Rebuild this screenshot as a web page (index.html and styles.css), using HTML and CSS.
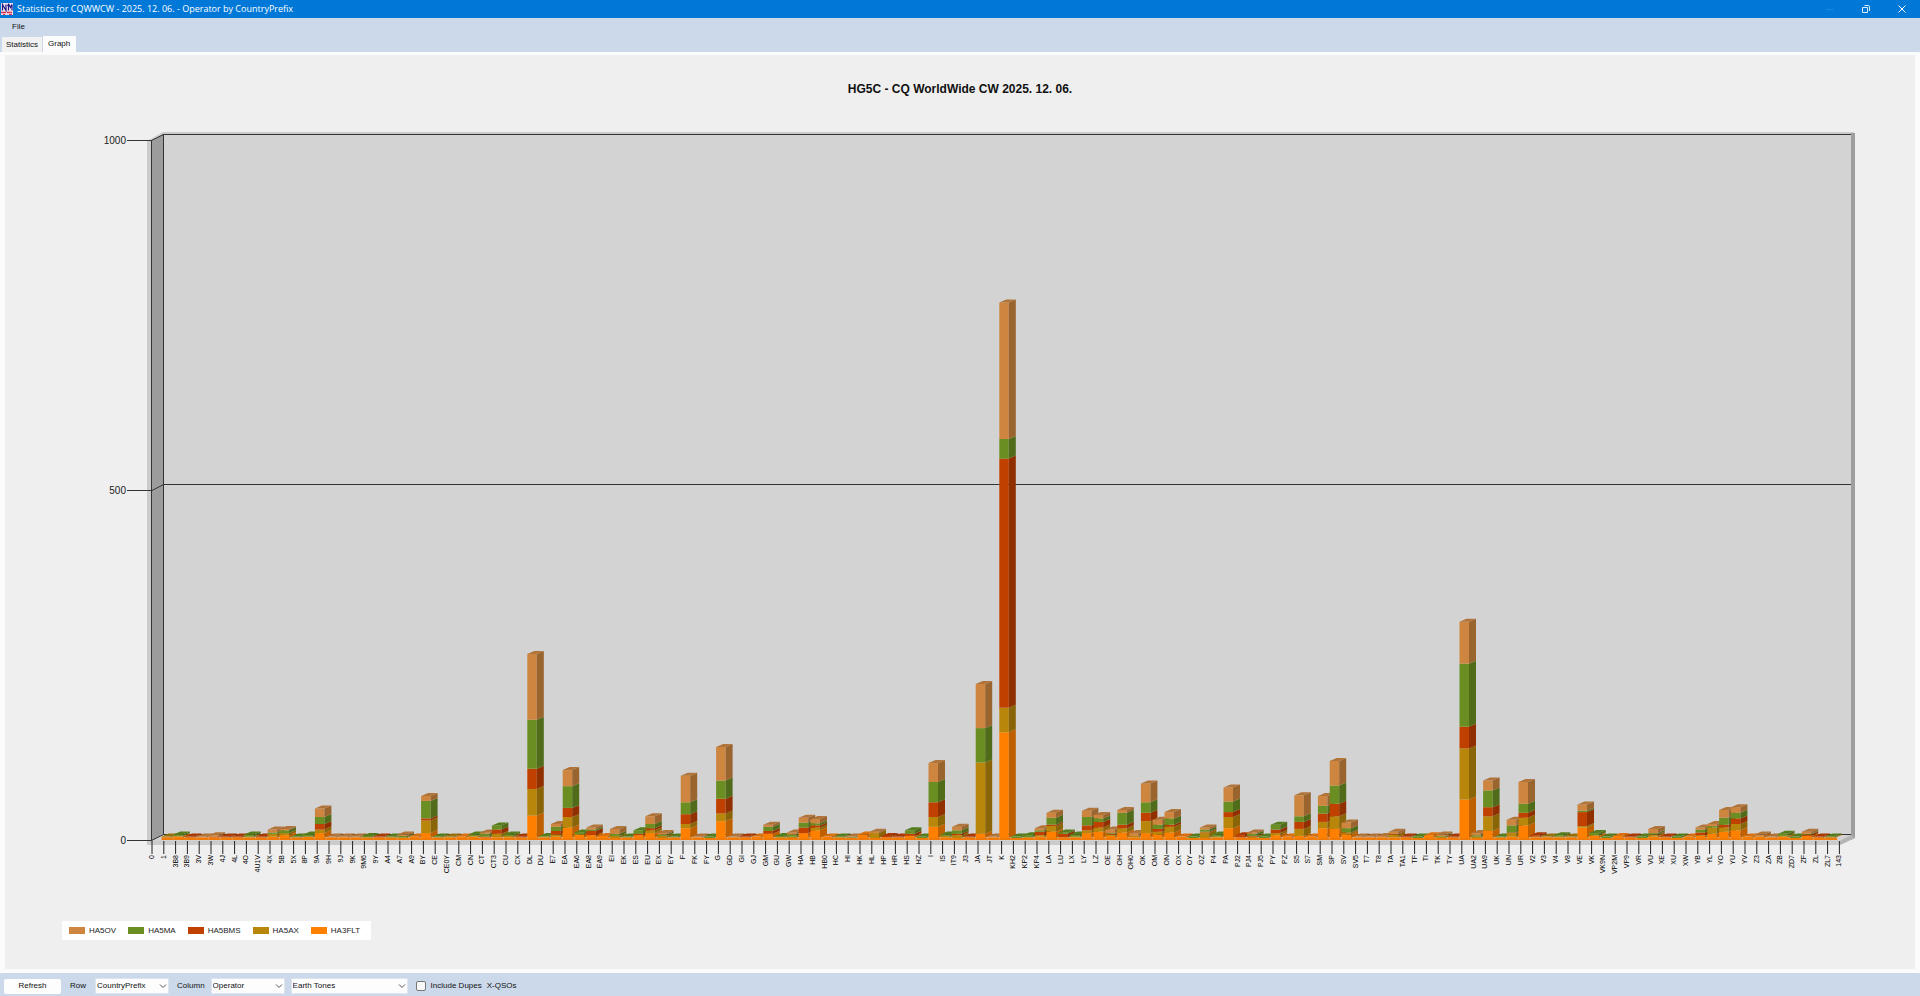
FILE: index.html
```html
<!DOCTYPE html>
<html lang="en">
<head>
<meta charset="utf-8">
<title>Statistics for CQWWCW</title>
<link rel="stylesheet" href="styles.css">
</head>
<body>
<header class="titlebar">
  <svg class="app-icon" viewBox="0 0 12 12" aria-hidden="true">
    <rect width="12" height="12" fill="#f3dfe8"/>
    <path d="M1.500 7.500V1.500L5 7.500V1.500M6.500 3l1-1.500V7.500M8 1.500l1.500 3 1.500-3V7.500" fill="none" stroke="#1c1c86" stroke-width="1.200"/>
    <path d="M0 9.500h5M6 9.500h5" stroke="#d8304a" stroke-width="1.500"/>
    <path d="M2 11.500h2M8 11.500h3" stroke="#d8304a"/>
  </svg>
  <span class="window-title">Statistics for CQWWCW - 2025. 12. 06. - Operator by CountryPrefix</span>
  <div class="window-buttons">
    <button type="button" aria-label="Minimize"><svg viewBox="0 0 10 10"><path d="M1 5.500h8" stroke="#1a86de"/></svg></button>
    <button type="button" aria-label="Restore"><svg viewBox="0 0 10 10"><path d="M1.500 3.500h5v5h-5zM3.500 1.500h3.500a1.500 1.500 0 0 1 1.500 1.500v4" fill="none" stroke="#d6ecff"/></svg></button>
    <button type="button" aria-label="Close"><svg viewBox="0 0 10 10"><path d="M1.500 1.500l7 7M8.500 1.500l-7 7" stroke="#fff"/></svg></button>
  </div>
</header>
<nav class="menubar"><button type="button">File</button></nav>
<div class="tabs" role="tablist">
  <button type="button" role="tab" aria-selected="false" class="tab">Statistics</button>
  <button type="button" role="tab" aria-selected="true" class="tab tab-active">Graph</button>
</div>
<main class="page">
  <section class="panel">
    <h1 class="chart-title">HG5C - CQ WorldWide CW 2025. 12. 06.</h1>
    <svg class="chart" id="chart" viewBox="5 110 1910 811" role="img" aria-label="Contacts by country prefix and operator"></svg>
    <ul class="legend">
      <li><i class="swatch ha5ov"></i>HA5OV</li>
      <li><i class="swatch ha5ma"></i>HA5MA</li>
      <li><i class="swatch ha5bms"></i>HA5BMS</li>
      <li><i class="swatch ha5ax"></i>HA5AX</li>
      <li><i class="swatch ha3flt"></i>HA3FLT</li>
    </ul>
  </section>
</main>
<footer class="toolbar">
  <button type="button" class="refresh">Refresh</button>
  <label for="row">Row</label>
  <span class="select"><select id="row"><option>CountryPrefix</option></select><svg viewBox="0 0 8 8"><path d="M1 2.500l3 3 3-3"/></svg></span>
  <label for="column">Column</label>
  <span class="select select-column"><select id="column"><option>Operator</option></select><svg viewBox="0 0 8 8"><path d="M1 2.500l3 3 3-3"/></svg></span>
  <span class="select select-wide"><select aria-label="Palette"><option>Earth Tones</option></select><svg viewBox="0 0 8 8"><path d="M1 2.500l3 3 3-3"/></svg></span>
  <input type="checkbox" id="dupes"><label for="dupes" class="dupes">Include Dupes</label>
  <span class="xqso">X-QSOs</span>
</footer>
<script src="chart.js"></script>
</body>
</html>
```
FILE: styles.css
```css
* { box-sizing: border-box; }
body {
  margin: 0;
  min-height: 100vh;
  display: flex;
  flex-direction: column;
  background: #ccd9ea;
  color: #111;
  font: 8px/12px "Liberation Sans", Arial, sans-serif;
}
button, select, input { font: inherit; color: inherit; margin: 0; }
button { border: 0; background: none; padding: 0; }

.titlebar {
  height: 18px;
  display: flex;
  align-items: center;
  padding-left: 1px;
  background: #0078d7;
  color: #fff;
}
.app-icon { width: 12px; height: 12px; margin-right: 4px; }
.window-title { flex: 1; font: 9px/16px "Open Sans", "Noto Sans", sans-serif; }
.window-buttons { display: flex; }
.window-buttons button { width: 36px; height: 16px; display: grid; place-items: center; }
.window-buttons svg { width: 10px; height: 10px; }

.menubar { height: 18px; padding: 3px 12px; }
.menubar button { display: block; }

.tabs { height: 16px; display: flex; align-items: flex-end; gap: 1px; padding-left: 2px; }
.tab { height: 15px; padding: 0 4px; background: #f2f2f2; }
.tab-active { height: 16px; padding: 0 6px 1px 5px; background: #fcfcfc; }

.page {
  flex: 1;
  display: flex;
  padding: 3px 5px 4px;
  background: #fbfbfb;
}
.panel {
  flex: 1;
  min-width: 0;
  display: flex;
  flex-direction: column;
  background: #efefef;
}
.chart-title {
  margin: 27px 0 14px;
  font-size: 12px;
  line-height: 14px;
  text-align: center;
  color: #111;
}
.chart { display: block; width: 100%; flex: 1; min-height: 0; }
.axis-text { font-size: 10px; fill: #222; }
.tick-text { font-size: 7px; fill: #000; }

.legend {
  align-self: flex-start;
  display: flex;
  gap: 12px;
  margin: 0 0 29px 57px;
  padding: 0 11px 0 7px;
  height: 19px;
  list-style: none;
  background: #fff;
  color: #222;
}
.legend li { display: flex; align-items: center; gap: 4px; }
.swatch { width: 16px; height: 7px; }
.ha5ov { background: #cd853f; }
.ha5ma { background: #6b8e23; }
.ha5bms { background: #c04000; }
.ha5ax { background: #b8860b; }
.ha3flt { background: #ff8000; }

.toolbar {
  height: 23px;
  display: flex;
  align-items: center;
  padding: 3px 4px 0;
}
.refresh { width: 57px; height: 15px; margin-right: 9px; background: #fdfdfd; border-radius: 2px; }
.select { position: relative; width: 74px; height: 16px; margin: 0 8px 0 9px; }
.select select {
  width: 100%;
  height: 100%;
  padding: 0 14px 0 1px;
  appearance: none;
  border: 1px solid #dfe5ee;
  background: #fdfdfd;
}
.select svg {
  position: absolute;
  right: 2px;
  top: 4px;
  width: 8px;
  height: 8px;
  fill: none;
  stroke: #555;
  pointer-events: none;
}
.select-column { margin: 0 6px; }
.select-wide { width: 117px; margin-left: 0; }
.toolbar input {
  width: 10px;
  height: 10px;
  appearance: none;
  border: 1px solid #777;
  border-radius: 2px;
  background: #f8f8f8;
}
.dupes { margin: 0 5px 0 5px; }
```
FILE: chart.js
```js
// Each row: prefix, then contacts for HA3FLT, HA5AX, HA5BMS, HA5MA, HA5OV.
const rows = `1 1 1 0 0 0
3B8 2 1 0 2 0
3B9 1 0 1 0 0
3V 1 0 0 0 1
3W 1 0 1 0 2
4J 1 0 1 0 0
4L 1 0 1 0 0
4O 1 1 0 3 0
4U1V 1 0 1 0 0
4X 2 4 0 2 4
5B 4 3 0 4 2
5X 1 0 0 1 0
8P 2 0 0 3 0
9A 7 5 8 10 12
9H 1 0 0 0 1
9J 1 0 0 0 1
9K 1 0 0 0 1
9M6 1 0 0 2 0
9Y 1 0 1 0 0
A4 1 0 0 1 0
A7 0 1 0 2 2
A9 2 0 0 0 0
BY 7 18 3 25 7
CE 1 0 0 1 0
CE0Y 1 1 0 0 0
CM 2 0 0 0 0
CN 2 1 0 2 0
CT 1 0 1 4 2
CT3 1 5 6 6 0
CU 1 2 0 2 0
CX 1 0 1 0 0
DL 32 38 29 70 94
DU 1 1 0 1 0
E7 2 3 5 6 4
EA 15 15 13 31 23
EA6 5 0 0 3 0
EA8 4 0 6 2 3
EA9 3 0 0 0 0
EI 0 3 0 3 7
EK 1 0 0 1 0
ES 4 0 2 5 0
EU 7 4 3 6 11
EX 0 3 0 2 2
EY 1 0 0 1 0
F 14 6 14 17 38
FK 1 0 0 0 1
FY 0 0 0 2 0
G 24 11 21 26 48
GD 1 0 0 0 1
GI 1 0 1 0 0
GJ 2 0 0 0 0
GM 6 0 4 6 3
GU 1 0 0 2 0
GW 0 2 0 3 3
HA 7 0 8 7 7
HB 11 4 3 3 6
HB0 2 0 0 0 0
HC 1 0 0 1 0
HI 0 0 0 1 1
HK 5 0 0 0 0
HL 0 7 0 0 2
HP 1 0 2 0 0
HR 1 0 1 0 0
HS 3 0 3 5 0
HZ 0 0 0 2 0
I 16 14 21 29 27
IS 1 2 0 2 0
IT9 0 4 2 5 5
J3 1 0 1 0 0
JA 6 102 0 49 63
JT 1 0 0 0 1
K 151 35 356 28 195
KH2 0 0 0 2 0
KP2 1 0 0 3 0
KP4 2 2 5 2 3
LA 9 8 2 10 7
LU 1 0 5 2 0
LX 1 1 0 3 0
LY 7 4 7 12 9
LZ 9 6 8 5 5
OE 3 2 1 1 5
OH 8 6 5 17 4
OH0 1 2 0 0 4
OK 7 17 12 15 27
OM 5 4 4 6 7
ON 8 8 3 9 9
OX 2 0 0 0 0
OY 0 0 0 2 0
OZ 0 8 1 3 3
P4 1 1 0 3 0
PA 14 16 7 15 20
PJ2 1 0 3 0 0
PJ4 0 2 1 3 2
PJ5 0 0 0 2 0
PY 4 3 5 7 0
PZ 2 0 0 0 0
S5 3 10 10 8 30
S7 2 0 0 0 0
SM 14 9 12 11 14
SP 13 18 18 26 35
SV 5 2 1 6 8
SV5 1 0 0 0 1
T7 1 0 0 0 1
T8 1 0 0 0 2
TA 1 4 1 0 3
TA1 1 0 1 0 0
TF 0 0 0 2 0
TI 4 0 0 0 0
TK 0 2 0 1 2
TY 1 0 1 0 0
UA 55 73 31 90 60
UA2 0 2 0 2 3
UA9 10 21 13 24 14
UK 1 0 0 1 0
UN 2 5 1 10 8
UR 18 11 7 13 31
V2 1 1 2 0 0
V3 1 1 0 0 0
V4 1 1 0 2 0
V8 1 1 0 0 0
VE 15 2 20 2 9
VK 3 1 0 3 0
VK9N 0 0 0 2 0
VP2M 3 0 0 0 0
VP9 1 0 1 0 0
VR 0 0 0 2 0
VU 2 2 1 2 6
XE 1 0 1 0 0
XU 0 0 0 2 0
XW 2 0 0 0 0
YB 3 1 4 4 3
YL 6 9 0 2 3
YO 9 6 4 10 11
YU 11 9 8 8 8
YV 2 0 0 0 0
Z3 2 0 0 0 3
ZA 1 0 0 0 1
ZB 2 1 0 3 0
ZD7 0 0 0 2 0
ZF 3 0 2 1 3
ZL 1 0 1 0 0
ZL7 1 0 0 1 0`.split("\n").map(line => {
  const [name, ...values] = line.split(" ");
  return { name, values: values.map(Number) };
});

const colors = [
  { front: "#ff8000", side: "#bf6000", top: "#d87010" },
  { front: "#b8860b", side: "#8a6508", top: "#96700c" },
  { front: "#c04000", side: "#903000", top: "#a83804" },
  { front: "#6b8e23", side: "#506b1a", top: "#557c1c" },
  { front: "#cd853f", side: "#9a642f", top: "#b07338" }
];

// Every bar stands on a thin orange sole that runs along the floor.
const originX = 152, step = 11.8, unit = 0.7, floor = 840, base = 838;
const barWidth = 9.5, depthX = 7, depthY = 3;
const parts = [];
const poly = (points, fill) => parts.push(`<polygon points="${points}" fill="${fill}"/>`);
const line = (points, color = "#333") => parts.push(`<polyline points="${points}" fill="none" stroke="${color}"/>`);

// Room: outer rim, back wall, side wall, floor edge.
poly("147,141 163,132 1854,132 1854,838 1840,845 147,845", "#cbcbcb");
poly("163,134 1851,134 1851,834 1840,841 152,841", "#d3d3d3");
poly("1851,133 1855,133 1855,838 1851,840", "#9e9e9e");
poly("1851,835 1855,838 1840,845 1840,841", "#b4b4b4");
poly("152,140 163,134 163,834 152,841", "#9c9c9c");
line("151.5,840 151.5,140.5 163.500,134.5 1851,134.5");
line("163.5,134 163.5,834.5 1851,834.5");
line("151.5,840.5 163.5,834.5");
line("127,140.5 152,140.5");
line("127,490.5 152,490.5 163.5,484.5 1851,484.5");
line("127,840.5 152,840.5");
for (const [y, label] of [[144, 1000], [494, 500], [844, 0]]) {
  parts.push(`<text class="axis-text" x="126" y="${y}" text-anchor="end">${label}</text>`);
}

rows.forEach((row, i) => {
  const left = originX + step * (i + 1) - 2.3;
  const right = left + barWidth;
  poly(`${left},${floor} ${right + 2.3},${floor} ${right + 2.3},${base} ${left},${base}`, "#f07a08");
  let y = base, last = 0;
  row.values.forEach((value, k) => {
    if (!value) return;
    const next = y - value * unit;
    poly(`${left},${y} ${right},${y} ${right},${next} ${left},${next}`, colors[k].front);
    poly(`${right},${y} ${right + depthX},${y - depthY} ${right + depthX},${next - depthY} ${right},${next}`, colors[k].side);
    y = next;
    last = k;
  });
  poly(`${left},${y} ${left + depthX},${y - depthY} ${right + depthX},${y - depthY} ${right},${y}`, colors[last].top);
});

["0", ...rows.map(row => row.name), "143"].forEach((name, i) => {
  const x = originX + step * i;
  line(`${x},841 ${x},854`, "#222");
  parts.push(`<text class="tick-text" transform="translate(${x + 2} 855) rotate(-90)" text-anchor="end">${name}</text>`);
});

document.getElementById("chart").innerHTML = parts.join("");
```
